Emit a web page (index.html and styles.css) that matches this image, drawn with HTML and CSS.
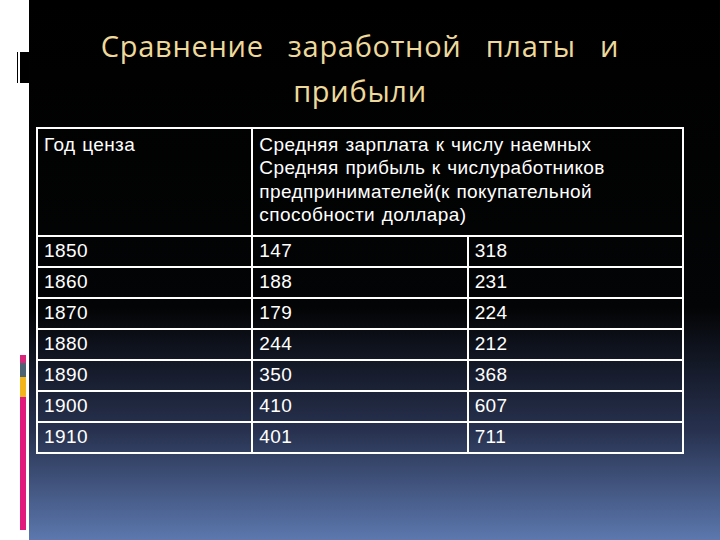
FILE: index.html
```html
<!DOCTYPE html>
<html lang="ru">
<head>
<meta charset="utf-8">
<link rel="stylesheet" href="styles.css">
</head>
<body>
<div class="page">
  <div class="side">
    <div class="marker"></div>
    <div class="bars">
      <div class="bar pink-top"></div>
      <div class="bar gray"></div>
      <div class="bar yellow"></div>
      <div class="bar pink-long"></div>
    </div>
  </div>
  <div class="main">
    <h1 class="title">Сравнение заработной платы и<br>прибыли</h1>
    <table class="data">
      <colgroup><col><col><col></colgroup>
      <tr class="head">
        <td>Год ценза</td>
        <td colspan="2">Средняя зарплата к числу наемных<br>Средняя прибыль к числуработников<br>предпринимателей(к покупательной<br>способности доллара)</td>
      </tr>
      <tr><td>1850</td><td>147</td><td>318</td></tr>
      <tr><td>1860</td><td>188</td><td>231</td></tr>
      <tr><td>1870</td><td>179</td><td>224</td></tr>
      <tr><td>1880</td><td>244</td><td>212</td></tr>
      <tr><td>1890</td><td>350</td><td>368</td></tr>
      <tr><td>1900</td><td>410</td><td>607</td></tr>
      <tr><td>1910</td><td>401</td><td>711</td></tr>
    </table>
  </div>
</div>
</body>
</html>
```
FILE: styles.css
```css
html, body {
  margin: 0;
  padding: 0;
}
body {
  width: 720px;
  height: 540px;
  overflow: hidden;
  background: #fff;
}
.page {
  display: flex;
  width: 720px;
  height: 540px;
}
.side {
  width: 29px;
  flex: none;
  background: #fff;
  display: flex;
  flex-direction: column;
  padding-top: 52px;
  padding-bottom: 10px;
  box-sizing: border-box;
}
.marker {
  margin-left: 17px;
  width: 12px;
  height: 31px;
  background: linear-gradient(to right, #000 0 1px, #fff 1px 3px, #000 3px);
}
.bars {
  margin-top: auto;
  margin-left: 20px;
  width: 6px;
  display: flex;
  flex-direction: column;
}
.bar { width: 6px; }
.pink-top { height: 8px; background: #d9267a; }
.gray { height: 14px; background: #4d6272; }
.yellow { height: 20px; background: #f3b51c; }
.pink-long { height: 133px; background: #e2197c; }
.main {
  flex: 1;
  background: linear-gradient(to bottom, #000 0%, #030405 57%, #283250 80%, #5c78ae 100%);
  display: flex;
  flex-direction: column;
}
.title {
  margin: 23px 0 14px 7px;
  width: 648px;
  font-family: "Open Sans", "DejaVu Sans", sans-serif;
  font-weight: normal;
  font-size: 29px;
  line-height: 45px;
  color: #eed99b;
  text-align: center;
  letter-spacing: 0.7px;
  word-spacing: 16px;
}
.data {
  margin-left: 7px;
  width: 648px;
  table-layout: fixed;
  border-collapse: collapse;
  font-family: "Liberation Sans", Arial, sans-serif;
  font-size: 19px;
  line-height: 23px;
  letter-spacing: 0.4px;
  word-spacing: 1px;
  color: #fff;
}
.data td {
  border: 2px solid #fff;
  padding: 2px 6px 4px 6px;
  vertical-align: top;
  text-align: left;
}
.data .head td {
  padding-top: 4px;
  padding-bottom: 9px;
  line-height: 23.3px;
}
```
